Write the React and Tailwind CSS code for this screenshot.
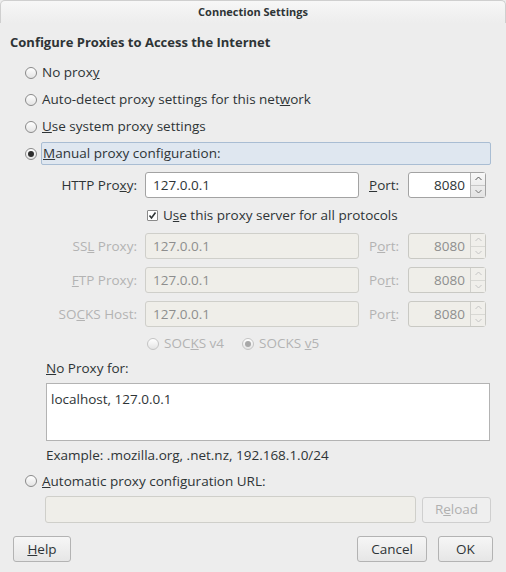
import React from 'react';

const font = { fontFamily: '"Open Sans", "DejaVu Sans", sans-serif' };

function Radio({ checked, disabled }) {
    return (
        <span
            className={`inline-flex items-center justify-center w-[12px] h-[12px] rounded-full border shrink-0 bg-gradient-to-b from-white to-[#e4e4e4] ${
                disabled ? 'border-[#c4c4c4]' : 'border-[#8a8a8a]'
            }`}
        >
            {checked && (
                <span className={`w-[6px] h-[6px] rounded-full ${disabled ? 'bg-[#a8a8a8]' : 'bg-[#2e2e2e]'}`} />
            )}
        </span>
    );
}

function Spin({ disabled }) {
    return (
        <div
            className={`flex w-[78px] h-[26px] rounded-[3px] border ${
                disabled ? 'border-[#c9c9c4] bg-[#efeee9]' : 'border-[#a3a3a3] bg-white'
            }`}
        >
            <div className={`flex-1 flex items-center justify-end pr-[5px] ${disabled ? 'text-[#8e8e8e]' : 'text-[#2e3436]'}`}>
                8080
            </div>
            <div
                className={`w-[15px] flex flex-col border-l ${
                    disabled ? 'border-[#d0d0cc] bg-[#f0efeb]' : 'border-[#b5b5b5] bg-gradient-to-b from-[#f8f8f8] to-[#e3e3e3]'
                }`}
            >
                <div className={`flex-1 flex items-center justify-center border-b ${disabled ? 'border-[#d8d8d4]' : 'border-[#c8c8c8]'}`}>
                    <svg width="7" height="5" viewBox="0 0 7 5">
                        <path d="M0.5 4 L3.5 1 L6.5 4" fill="none" stroke={disabled ? '#c4c4c4' : '#555'} strokeWidth="1" />
                    </svg>
                </div>
                <div className="flex-1 flex items-center justify-center">
                    <svg width="7" height="5" viewBox="0 0 7 5">
                        <path d="M0.5 1 L3.5 4 L6.5 1" fill="none" stroke={disabled ? '#c4c4c4' : '#777'} strokeWidth="1" />
                    </svg>
                </div>
            </div>
        </div>
    );
}

function ProxyRow({ label, port, disabled }) {
    const txt = disabled ? 'text-[#b3b3b3]' : 'text-[#2e3436]';
    return (
        <div className="flex items-center h-[26px]">
            <div className={`w-[137px] text-right whitespace-nowrap ${txt}`}>{label}</div>
            <div
                className={`ml-[8px] w-[214px] h-[26px] flex items-center px-[7px] rounded-[3px] border ${
                    disabled ? 'border-[#cfcfca] bg-[#efeee9] text-[#8e8e8e]' : 'border-[#a3a3a3] bg-white text-[#2e3436]'
                }`}
            >
                127.0.0.1
            </div>
            <div className={`ml-[10px] w-[39px] ${txt}`}>{port}</div>
            <Spin disabled={disabled} />
        </div>
    );
}

function Button({ children, className = '', disabled }) {
    return (
        <div
            className={`h-[26px] flex items-center justify-center rounded-[3px] border ${
                disabled
                    ? 'border-[#cfcfcf] bg-[#efefef] text-[#b0b0b0]'
                    : 'border-[#b3b3b3] bg-gradient-to-b from-[#f6f6f6] to-[#e6e6e6] text-[#2e3436]'
            } ${className}`}
        >
            {children}
        </div>
    );
}

export default function App() {
    return (
        <div className="w-[506px] h-[572px] bg-[#ededed] text-[13.5px] text-[#2e3436] overflow-hidden" style={font}>
            <div className="h-[23px] flex items-center justify-center rounded-t-[5px] border-t border-x border-[#cfcfcf] bg-gradient-to-b from-[#f7f7f7] to-[#ededed] text-[11px] font-bold text-[#2e3436]">
                Connection Settings
            </div>

            <div className="pl-[10px] pt-[10px] font-bold text-[13px] h-[36px]">Configure Proxies to Access the Internet</div>

            <div className="pl-[25px] flex flex-col">
                <div className="h-[27px] flex items-center gap-[5px]">
                    <Radio />
                    <span>No prox<u>y</u></span>
                </div>
                <div className="h-[27px] flex items-center gap-[5px]">
                    <Radio />
                    <span>Auto-detect proxy settings for this net<u>w</u>ork</span>
                </div>
                <div className="h-[27px] flex items-center gap-[5px]">
                    <Radio />
                    <span><u>U</u>se system proxy settings</span>
                </div>
                <div className="h-[27px] flex items-center gap-[4px]">
                    <Radio checked />
                    <div className="w-[450px] h-[23px] flex items-center pl-[1px] rounded-[2px] border border-[#a9bdd3] bg-[#dfe7f0]">
                        <span><u>M</u>anual proxy configuration:</span>
                    </div>
                </div>
            </div>

            <div className="mt-[5px] flex flex-col">
                <ProxyRow label={<>HTTP Pro<u>x</u>y:</>} port={<><u>P</u>ort:</>} />
                <div className="h-[35px] flex items-center pl-[147px] gap-[5px]">
                    <span className="w-[11px] h-[11px] flex items-center justify-center border border-[#8a8a8a] bg-white rounded-[1px]">
                        <svg width="9" height="9" viewBox="0 0 9 9">
                            <path d="M1.5 4.5 L3.5 7 L7.5 1.5" fill="none" stroke="#2e3436" strokeWidth="1.6" />
                        </svg>
                    </span>
                    <span>U<u>s</u>e this proxy server for all protocols</span>
                </div>
                <div className="flex flex-col gap-[8px]">
                    <ProxyRow disabled label={<>SS<u>L</u> Proxy:</>} port={<>P<u>o</u>rt:</>} />
                    <ProxyRow disabled label={<><u>F</u>TP Proxy:</>} port={<>Po<u>r</u>t:</>} />
                    <ProxyRow disabled label={<>SO<u>C</u>KS Host:</>} port={<>Por<u>t</u>:</>} />
                </div>
                <div className="h-[33px] flex items-center pl-[147px] gap-[5px] text-[#b3b3b3]">
                    <Radio disabled />
                    <span>SOC<u>K</u>S v4</span>
                    <span className="w-[8px]" />
                    <Radio disabled checked />
                    <span>SOCKS <u>v</u>5</span>
                </div>
            </div>

            <div className="pl-[46px] pr-[16px]">
                <div className="h-[17px] flex items-center"><span><u>N</u>o Proxy for:</span></div>
                <div className="mt-[6px] h-[58px] bg-white border border-[#b3b3b3] px-[4px] pt-[5px]">localhost, 127.0.0.1</div>
                <div className="h-[28px] flex items-center">Example: .mozilla.org, .net.nz, 192.168.1.0/24</div>
            </div>

            <div className="pl-[25px] h-[24px] flex items-center gap-[5px]">
                <Radio />
                <span><u>A</u>utomatic proxy configuration URL:</span>
            </div>
            <div className="pl-[45px] pr-[15px] mt-[3px] flex items-center gap-[6px]">
                <div className="w-[371px] h-[27px] rounded-[3px] border border-[#cfcfca] bg-[#efeee9]" />
                <Button disabled className="w-[69px]">
                    <span>R<u>e</u>load</span>
                </Button>
            </div>

            <div className="mt-[13px] px-[13px] flex items-center">
                <Button className="w-[58px]">
                    <span><u>H</u>elp</span>
                </Button>
                <div className="flex-1" />
                <Button className="w-[70px]">Cancel</Button>
                <Button className="w-[55px] ml-[11px]">OK</Button>
            </div>
        </div>
    );
}
